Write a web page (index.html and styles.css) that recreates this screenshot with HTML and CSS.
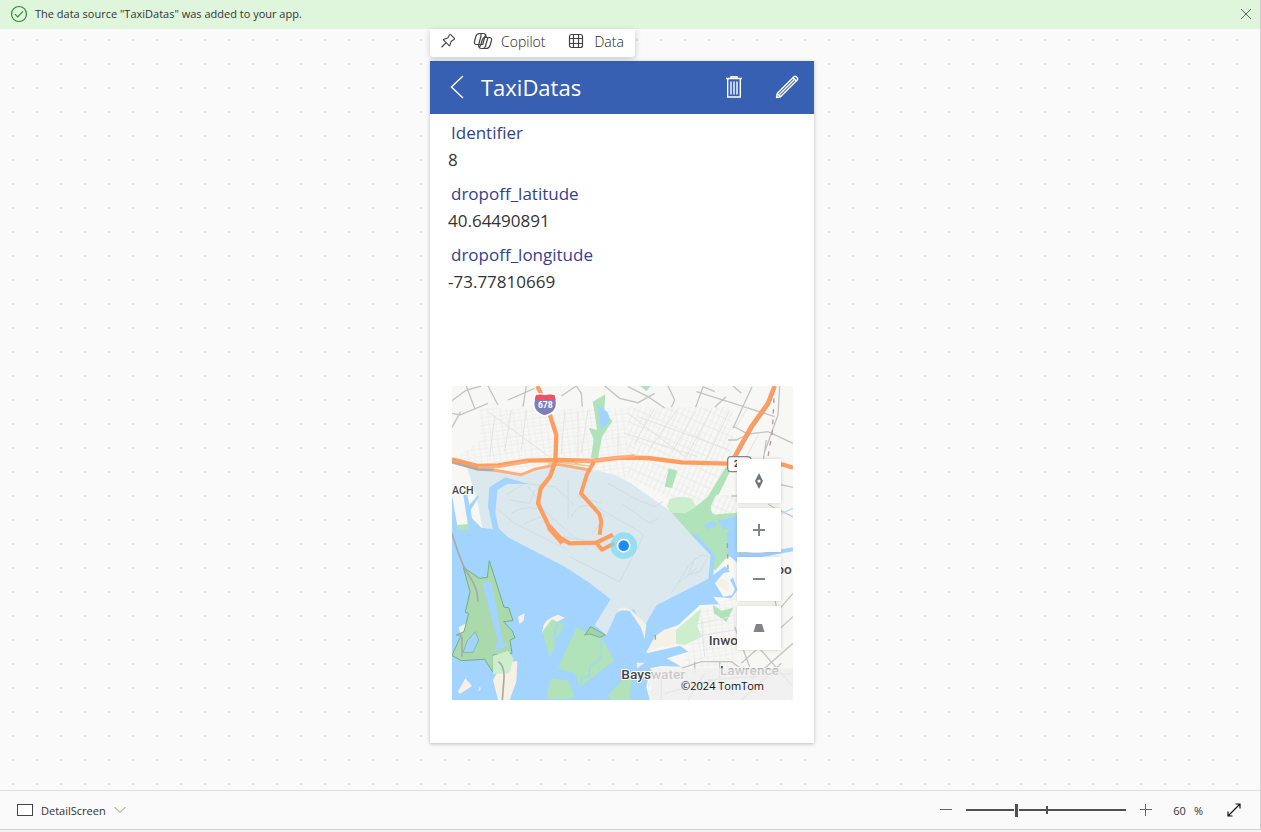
FILE: index.html
```html
<!DOCTYPE html>
<html lang="en">
<head>
<meta charset="utf-8">
<title>DetailScreen</title>
<link rel="stylesheet" href="styles.css">
</head>
<body>
<div class="studio">
  <div class="banner" role="status">
    <svg class="banner-icon" width="18" height="18" viewBox="0 0 18 18" fill="none" stroke="#2f8a35" stroke-width="1.2"><circle cx="9" cy="9" r="7.5"/><path d="M5 9.2l2.700 2.700L13 6.400"/></svg>
    <span class="banner-text">The data source "TaxiDatas" was added to your app.</span>
    <button class="icon-button" aria-label="Dismiss">
      <svg width="12" height="12" viewBox="0 0 12 12" stroke="#5f6b60" fill="none"><path d="M1 1l10 10M11 1L1 11"/></svg>
    </button>
  </div>

  <main class="canvas">
    <div class="stage">
      <div class="toolbar">
        <button class="tool" aria-label="Pin">
          <svg width="16" height="16" viewBox="0 0 16 16" fill="none" stroke="#424242" stroke-width="1.1" stroke-linejoin="round" stroke-linecap="round"><path d="M9.500 1.800Q10.200 1.200 10.900 1.900L14.200 5.200Q14.900 6 14 6.600L11.200 8.200 9.900 12.200Q9.500 12.900 8.900 12.400L3.700 7.200Q3.200 6.500 3.900 6.200L7.800 4.900ZM5.900 9.800L1.800 14"/></svg>
        </button>
        <button class="tool">
          <svg width="20" height="18" viewBox="0 0 20 18" fill="none" stroke="#424242" stroke-width="1.200" stroke-linejoin="round"><path d="M5 12.500H3.600Q.8 12.500 1.500 9.500L2.800 4.500Q3.700 1.500 6.500 1.500H10.500Q12.300 1.500 12.800 3.500L13.300 5.500M7 1.500Q8.500 1.800 8 4L6 11.500Q5.300 13.500 5.700 14.500Q6.300 16.500 8.500 16.500H13Q16 16.500 17 13.500L18.500 8.500Q19.200 5.500 16.400 5.500H12Q10 5.500 9.400 7.500L7.600 13.500Q7 15 5.700 14.200M12.700 1.800L9.700 12.500H5M15 5.500L12.300 14.500Q11.700 16.500 10 16.500"/></svg>
          Copilot
        </button>
        <button class="tool tool-data">
          <svg width="16" height="16" viewBox="0 0 16 16" fill="none" stroke="#424242" stroke-width="1.200"><rect x="1.500" y="1.500" width="13" height="13" rx="2"/><path d="M5.500 1.500v13M10.500 1.500v13M1.500 5.500h13M1.500 10.500h13"/></svg>
          Data
        </button>
      </div>

      <section class="phone">
        <header class="app-bar">
          <button class="app-button" aria-label="Back">
            <svg width="16" height="26" viewBox="0 0 16 26" fill="none" stroke="#fff" stroke-width="1.400"><path d="M14 2L2.500 13 14 24"/></svg>
          </button>
          <h1 class="app-title">TaxiDatas</h1>
          <button class="app-button" aria-label="Delete">
            <svg width="18" height="24" viewBox="0 0 18 24" fill="none" stroke="#fff" stroke-width="1.400"><path d="M1 3.500h16M6 3V1.700h6V3M2.700 4v18h12.600V4M6 6.500v13M9 6.500v13M12 6.500v13"/></svg>
          </button>
          <button class="app-button app-edit" aria-label="Edit">
            <svg width="24" height="24" viewBox="0 0 24 24" fill="none" stroke="#fff" stroke-width="1.400" stroke-linejoin="round"><path d="M1.500 22.500l.7-4L18.900 1.800Q20.300.7 21.700 2.200 23.300 3.700 22.200 5.100L5.500 21.800ZM2.200 18.500l3.300 3.300M18 2.700l3.300 3.300M4.500 19.500L19.700 4.300"/></svg>
          </button>
        </header>

        <dl class="fields">
          <div><dt>Identifier</dt><dd>8</dd></div>
          <div><dt>dropoff_latitude</dt><dd>40.64490891</dd></div>
          <div><dt>dropoff_longitude</dt><dd>-73.77810669</dd></div>
        </dl>

        <div class="map">
          <svg class="map-art" viewBox="12 18 1023 942" role="img" aria-label="Map of the drop-off location">
            <defs>
              <pattern id="streets" width="38" height="23" patternUnits="userSpaceOnUse" patternTransform="rotate(-8)"><path d="M0 0H38M0 12H38M9 0V23M28 0V23" stroke="#ececeb" stroke-width="2.500" fill="none"/></pattern>
              <pattern id="streets-east" width="30" height="42" patternUnits="userSpaceOnUse" patternTransform="rotate(24)"><path d="M0 0H30M0 20H30M8 0V42M22 0V42" stroke="#e9e9e8" stroke-width="2.500" fill="none"/></pattern>
            </defs>
            <rect x="12" y="18" width="1023" height="942" fill="#f7f7f5"/>
            <path d="M90 85H540V300L12 240 98 180Z" fill="url(#streets)"/>
            <path d="M540 82H853V250L800 350 790 400 650 350 540 290Z" fill="url(#streets-east)"/>
            <path d="M740 700L860 650 870 860H700L720 820Z" fill="url(#streets)"/>
            <path d="M795 345H868V415H795ZM600 870H1035V960H600Z" fill="url(#streets-east)"/>

            <!-- parks and marshes -->
            <g fill="#b0e3ba">
              <path d="M472 43L434 65 440 100 447 150 422 143 437 178 429 235H450L462 170 494 122 468 105Z"/>
              <path d="M577 18H608L595 34Z"/>
              <path d="M662 265L688 272 672 324 650 320Z"/>
              <path d="M834 260H848V270L812 344H804L788 380Q790 410 812 402L868 398V530H838L801 572 780 540 720 455 660 392 690 368 745 378 778 352Z"/>
              <path d="M868 512L940 523 868 534Z"/>
            </g>
            <path d="M656 380L665 358Q690 345 730 355L745 380 712 400 672 398Z" fill="#cceecd"/>

            <!-- airport -->
            <path d="M55 258L140 272 225 285 330 255 440 270 500 285 548 309 606 350 666 392 726 460 788 525 782 596 626 675 591 740 500 800 140 460 103 445 85 350Z" fill="#dbe9ee"/>
            <g fill="none" stroke="#d0dde2" stroke-width="3">
              <path d="M175 345l55-35 90 10 60 55M185 360l60 10 15-40M190 400q60-40 120 10l100 90M360 300v115M230 430l50-20 60 60 70 10M390 350l70 20M140 380l60 50 160 80M370 410q20-45 75-30l130 75q15 10 5 25l-65 125-150-75M480 310l90 50 50 20 25-15M520 370l85 60 25-15M530 480l45 25M670 640l50-80q40-50 60-30l-25 45-35 10 20-50M690 610l55-45M240 320l40 50M430 460q30-25 40-60M410 510q20-30 40 0"/>
            </g>

            <!-- water -->
            <path fill="#a3d3ff" d="M12 345L30 450H62L46 345H58L64 375 90 345 92 352 68 390 72 415 100 443 135 448 120 380 124 322 172 292 240 311 178 312 148 330 142 400 152 445 180 472 350 560 420 605 488 658 440 735 475 765 505 700 528 687 560 690 591 775 591 735 626 675 781 596 788 525 726 460 748 465 801 525 796 585 831 558 846 575 826 580 801 610 826 650 852 645 861 628 846 600 855 592 868 630 850 655 796 650 813 673 756 675 691 735 650 750 596 820 696 797 721 815 656 835 700 860 640 858 606 865 595 920 605 960H12Z"/>
            <path d="M450 75L478 95 487 120 458 150Z" fill="#a3d3ff"/>
            <path d="M768 435L795 422 808 435 780 448ZM810 422L868 408V548L841 525 836 460 850 445 826 448Z" fill="#a3d3ff"/>

            <!-- islands and beaches -->
            <g fill="#f5f1e5">
              <path d="M210 710L230 700 227 722 214 732ZM285 745Q285 720 330 704L350 713 305 738 281 760ZM135 900L180 820 196 845 208 842 205 905 185 960H150ZM30 935L52 895 72 918 35 942ZM90 935L96 918 98 928Z"/>
              <path d="M505 690L528 682 550 690 595 734 590 776 580 745 545 692ZM594 818L620 770 650 748 684 748 682 795 625 805ZM32 742L54 730 45 795ZM566 848H590L568 865ZM802 610L822 592 844 612 840 635Z"/>
            </g>
            <g fill="#b0e3ba">
              <path d="M283 755L312 718 329 726 316 760 322 795 306 832ZM332 728L348 730 330 775 322 765ZM385 743L415 755 432 738 460 770 498 842 397 920 380 880 329 865ZM310 895L360 902 378 940 370 956 300 958 298 930ZM492 960L478 947 530 895H552L545 960Z"/>
              <path d="M795 675L820 692 856 683 835 726 798 700ZM25 435L62 432V450H28Z"/>
            </g>
            <path d="M684 750L760 685 748 740 762 770 710 795 684 792Z" fill="#cceecd"/>
            <path d="M458 750L460 835 425 860V888L400 895V915" fill="none" stroke="#a3d3ff" stroke-width="4"/>
            <path d="M410 765L428 740 472 765 455 772 425 762Z" fill="#9fd2ae" stroke="#76b384" stroke-width="3"/>
            <path fill="#abd9ae" stroke="#72af82" stroke-width="3" d="M124 542L168 682 182 683 195 722 167 725 192 752 201 773 186 780 192 820 135 825V877L110 838 40 842 12 826 40 765 25 765 48 755 62 700 52 697 66 635 46 562 94 595 118 592Z"/>
            <path d="M103 610L130 603 165 788 180 795 140 818 150 785Z" fill="#a3d3ff"/>
            <path d="M45 818L58 782 82 755 92 780 75 817Z" fill="#a3d3ff" stroke="#72af82" stroke-width="2"/>
            <path d="M134 828L180 812 196 835 185 880 135 882Z" fill="#cceecd"/>
            <path d="M12 460Q40 555 65 590T90 665M152 845Q170 860 168 895L163 960M42 770V830" fill="none" stroke="#aaa9a9" stroke-width="5"/>

            <!-- minor roads -->
            <g fill="none" stroke="#c4c4c4" stroke-width="4">
              <path d="M55 18L80 85M12 62L55 30 100 18M12 100L35 105 120 70M12 142L38 95M120 18L150 75M235 18L225 80M180 60L260 25M340 48L385 18M385 18L400 40 403 80M470 18L515 55 570 68 620 40M540 20L600 50 650 84M660 18L680 60 670 82M765 20L743 82M745 35L850 68 980 110M765 20L800 35M834 50L800 82M880 40L855 18M912 20L855 145M855 138L900 162 960 155 1035 190M840 180H865L895 165M950 215L990 105 995 18M945 245L955 180M990 312L1035 322M960 372L980 384 1035 410M850 348H870M980 655L985 680M1035 640L950 740M1035 710L880 850M1035 790L910 900M930 800L1035 920M860 740L905 860M600 865L640 890V960M700 865L760 845H850L900 880M720 960L770 880M740 845V880M815 845V930M880 960L1000 850M780 900L1035 880M650 940L800 900"/>
            </g>
            <g fill="none" stroke="#e4e4e4" stroke-width="3">
              <path d="M120 95L310 235M140 110L125 230M190 90L170 215M235 90L220 210M350 95L340 220M390 100V230M420 90L400 220M510 160V240M540 100L710 230M620 85L560 190M690 85L600 215M745 90L670 220M790 90L710 240M845 90L770 250M530 160L750 230M570 110L845 210M930 165L880 260M900 80L865 140M730 735L850 710M740 770L860 750M760 720L770 830"/>
            </g>
            <path d="M978 55L973 155 960 230M838 490L840 570M622 765V790" fill="none" stroke="#b99999" stroke-width="4" stroke-dasharray="14 18"/>
            <path d="M868 525L940 525 1035 508" fill="none" stroke="#a3d3ff" stroke-width="12"/>
            <path d="M990 405L1035 385" fill="none" stroke="#b7dcfa" stroke-width="4"/>

            <!-- motorways -->
            <g fill="none" stroke-linejoin="round">
              <path d="M12 246L90 268 140 270" stroke="#aaa" stroke-width="9"/>
              <path d="M135 270L220 284 260 268 330 253 425 270" stroke="#ffad7a" stroke-width="9"/>
              <path d="M300 252L330 247 425 258" stroke="#cad8a2" stroke-width="5"/>
              <path d="M12 238L90 258 150 256 240 242 330 240 430 243 516 233 600 234 700 247 840 251 1005 254 1035 263" stroke="#ff9d60" stroke-width="13"/>
              <path d="M90 262L155 260 240 245M380 248L450 240 560 227" stroke="#ffae7c" stroke-width="8"/>
              <path d="M268 18L281 45M304 100L325 165 322 245 306 290 278 325 270 370 303 440 330 470 365 490 445 488 495 464" stroke="#ff9d60" stroke-width="13"/>
              <path d="M303 440L345 488" stroke="#ff9d60" stroke-width="18"/>
              <path d="M438 245L416 285 399 340 454 402 460 425 455 464M445 488L462 509 500 490" stroke="#ff9d60" stroke-width="12"/>
              <path d="M980 18L960 70 910 140 863 225 846 255" stroke="#ff9d60" stroke-width="14"/>
              <path d="M982 25L963 77 915 145 870 224" stroke="#a7a7a7" stroke-width="2"/>
            </g>

            <path d="M262 43Q280 40 291 44 302 40 322 43L326 67Q328 98 291 108 254 98 257 67Z" fill="#7c7fbb" stroke="#fff" stroke-width="5"/>
            <path d="M264 45Q280 42 291 46 302 42 319 45L323 60H260Z" fill="#ef5268"/>
            <text class="map-shield" x="292" y="84" text-anchor="middle">678</text>
            <rect x="839" y="230" width="70" height="45" rx="10" fill="#fff" stroke="#888" stroke-width="4"/>
            <text class="map-shield map-shield-dark" x="858" y="261">2</text>
            <text class="map-label map-area" x="12" y="341">ACH</text>
            <text class="map-label" x="782" y="796">Inwo</text>
            <text class="map-label" x="985" y="582">oo</text>
            <text class="map-label" x="520" y="897">Bayswater</text>
            <text class="map-label" x="816" y="884">Lawrence</text>
            <path d="M696 865H1035V960H684V865Z" fill="#efefef" fill-opacity=".78"/>
            <path d="M610 865H684V960H610Z" fill="#efefef" fill-opacity=".78"/>

            <circle cx="527" cy="497" r="40" fill="#73d8f5" fill-opacity=".65"/>
            <circle cx="527" cy="497" r="21" fill="#fff"/>
            <circle cx="527" cy="497" r="16" fill="#1a8cff"/>
          </svg>
          <div class="map-controls">
            <button class="map-button" aria-label="Reset rotation"><svg width="16" height="16" viewBox="0 0 16 16"><path d="M8 0l4 8-4 8-4-8z" fill="#70757b"/><circle cx="8" cy="8" r="1.600" fill="#fff"/></svg></button>
            <button class="map-button" aria-label="Zoom in"><svg width="16" height="16" viewBox="0 0 16 16"><path d="M2 8h12M8 2v12" stroke="#808488" stroke-width="2"/></svg></button>
            <button class="map-button" aria-label="Zoom out"><svg width="16" height="16" viewBox="0 0 16 16"><path d="M2 8h12" stroke="#808488" stroke-width="2"/></svg></button>
            <button class="map-button" aria-label="Tilt"><svg width="16" height="16" viewBox="0 0 16 16"><path d="M5 4h6l2.500 8h-11z" fill="#808488"/></svg></button>
          </div>
          <span class="map-credit">©2024 TomTom</span>
        </div>
      </section>
    </div>
  </main>

  <footer class="status-bar">
    <button class="screen-picker">
      <svg width="16" height="12" viewBox="0 0 16 12"><rect x=".5" y=".5" width="15" height="11" fill="#fff" stroke="#444"/></svg>
      DetailScreen
      <svg width="12" height="8" viewBox="0 0 12 8" fill="none" stroke="#a58d62"><path d="M.5 1L6 6.500 11.500 1"/></svg>
    </button>
    <div class="zoom">
      <button class="icon-button" aria-label="Zoom out canvas"><svg width="12" height="12" viewBox="0 0 12 12"><path d="M0 5.500h12" stroke="#666"/></svg></button>
      <input class="zoom-range" type="range" min="0" max="100" value="31" aria-label="Canvas zoom">
      <button class="icon-button" aria-label="Zoom in canvas"><svg width="12" height="12" viewBox="0 0 12 12"><path d="M0 5.500h12M5.500 0v12" stroke="#666"/></svg></button>
      <span class="zoom-value"><span>60</span><span>%</span></span>
      <button class="icon-button" aria-label="Fit to window"><svg width="14" height="14" viewBox="0 0 14 14" fill="none" stroke="#111" stroke-width="1.200"><path d="M1 13L13 1M8.500 1H13v4.500M1 8.500V13h4.500"/></svg></button>
    </div>
  </footer>
</div>
</body>
</html>
```
FILE: styles.css
```css
* {
  box-sizing: border-box;
}

body {
  margin: 0;
  background: #f3f3f3;
  font-family: "Open Sans", "Noto Sans", sans-serif;
  font-size: 11px;
  color: #333;
}

button {
  display: flex;
  align-items: center;
  justify-content: center;
  margin: 0;
  padding: 0;
  border: 0;
  background: none;
  font: inherit;
  color: inherit;
}

svg {
  display: block;
  flex: none;
}

.studio {
  display: flex;
  flex-direction: column;
  min-height: calc(100vh - 2px);
  border-right: 1px solid #d0d0d0;
  border-bottom: 1px solid #d0d0d0;
  background: #fafafa;
}

.banner {
  display: flex;
  align-items: center;
  gap: 7px;
  height: 29px;
  padding: 0 7px 2px 10px;
  background: #dff6dd;
}

.banner-text {
  flex: 1;
}

.canvas {
  display: flex;
  flex: 1;
  justify-content: center;
  padding-right: 16px;
  background-image: conic-gradient(from 270deg at 2px 2px, #dedede 90deg, transparent 0);
  background-position: 12px 10px;
  background-size: 24px 24px;
}

.stage {
  display: flex;
  flex-direction: column;
  align-items: flex-start;
  gap: 4px;
  width: 384px;
  padding-bottom: 47px;
}

.toolbar {
  display: flex;
  align-items: center;
  gap: 17px;
  height: 28px;
  padding: 0 11px 4px 10px;
  border-radius: 0 0 4px 4px;
  background: #fff;
  box-shadow: 0 2px 6px rgba(0, 0, 0, .2);
  font-size: 14px;
  font-weight: 300;
  color: #222;
  z-index: 1;
}

.tool {
  gap: 8px;
}

.tool-data {
  margin-left: 6px;
  gap: 10px;
}

.phone {
  width: 100%;
  padding-bottom: 43px;
  background: #fff;
  box-shadow: 0 1px 4px rgba(0, 0, 0, .25);
}

.app-bar {
  display: flex;
  align-items: center;
  gap: 16px;
  height: 53px;
  padding: 0 15px 2px 19px;
  background: #3860b2;
  color: #fff;
}

.app-title {
  flex: 1;
  margin: 0;
  font-size: 22px;
  font-weight: 500;
}

.app-edit {
  margin-left: 16px;
}

.fields {
  display: flex;
  flex-direction: column;
  gap: 7px;
  margin: 0;
  padding: 5px 18px 0;
  font-size: 17px;
  line-height: 27px;
  color: #333;
}

.fields dt {
  padding-left: 3px;
  color: #33418f;
}

.fields dd {
  margin: 0;
}

.map {
  position: relative;
  margin: 91px 21px 0 22px;
}

.map-art {
  width: 100%;
  height: auto;
}

.map-label {
  font: 500 41px Roboto, sans-serif;
  fill: #444;
  stroke: #fff;
  stroke-width: 6px;
  paint-order: stroke;
}

.map-area {
  font-size: 32px;
}

.map-shield {
  font: 700 26px Roboto, sans-serif;
  fill: #fff;
}

.map-shield-dark {
  fill: #444;
}

.map-controls {
  position: absolute;
  top: 73px;
  right: 12px;
  display: flex;
  flex-direction: column;
  gap: 5px;
}

.map-button {
  width: 44px;
  height: 44px;
  background: #fff;
  box-shadow: 0 0 4px rgba(0, 0, 0, .16);
}

.map-credit {
  position: absolute;
  right: 29px;
  bottom: 5px;
  font-size: 11px;
  line-height: 18px;
  color: #111;
}

.status-bar {
  display: flex;
  align-items: center;
  justify-content: space-between;
  height: 39px;
  padding: 0 19px 0 17px;
  border-top: 1px solid #dedede;
  background: #fafafa;
}

.screen-picker {
  gap: 8px;
}

.zoom {
  display: flex;
  align-items: center;
  gap: 12px;
}

.icon-button {
  min-width: 14px;
  min-height: 16px;
}

.zoom-range {
  width: 162px;
  height: 14px;
  margin: 0;
  appearance: none;
  background:
    linear-gradient(#505050, #505050) 81px 3px / 2px 8px no-repeat,
    linear-gradient(#505050, #505050) center / 160px 2px no-repeat;
}

.zoom-range::-webkit-slider-thumb {
  appearance: none;
  width: 5px;
  height: 13px;
  border: solid #fafafa;
  border-width: 0 1px;
  background: #505050;
}

.zoom-value {
  display: flex;
  gap: 8px;
  margin: 0 12px 0 8px;
}
```
